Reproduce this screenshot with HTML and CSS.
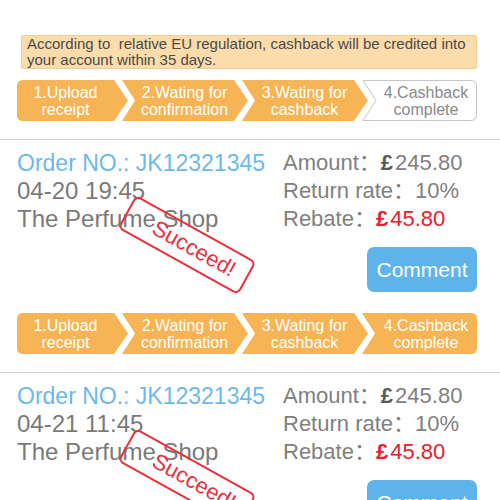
FILE: index.html
```html
<!DOCTYPE html>
<html>
<head>
<meta charset="utf-8">
<link rel="stylesheet" href="styles.css">
</head>
<body>
<div class="page">
  <div class="notice">According to&nbsp; relative EU regulation, cashback will be credited into your account within 35 days.</div>

  <section class="block">
    <div class="steps">
      <div class="step step-first">
        <svg class="shape" width="111" height="41" viewBox="0 0 111 41"><path d="M6,0 H97 L111,20.5 L97,41 H6 Q0,41 0,35 V6 Q0,0 6,0 Z"/></svg>
        <span class="label">1.Upload<br>receipt</span>
      </div>
      <div class="step step-mid">
        <svg class="shape" width="126" height="41" viewBox="0 0 126 41"><path d="M0,0 H112 L126,20.5 L112,41 H0 L13,20.5 Z"/></svg>
        <span class="label">2.Wating for<br>confirmation</span>
      </div>
      <div class="step step-mid">
        <svg class="shape" width="126" height="41" viewBox="0 0 126 41"><path d="M0,0 H112 L126,20.5 L112,41 H0 L13,20.5 Z"/></svg>
        <span class="label">3.Wating for<br>cashback</span>
      </div>
      <div class="step step-last step-pending">
        <svg class="shape" width="115" height="41" viewBox="0 0 115 41"><path d="M1,0.5 H108.5 Q114.5,0.5 114.5,6.5 V34.5 Q114.5,40.5 108.5,40.5 H1 L14,20.5 Z"/></svg>
        <span class="label">4.Cashback<br>complete</span>
      </div>
    </div>
    <hr class="sep">
    <div class="info">
      <div class="col-left">
        <div class="order">Order NO.: JK12321345</div>
        <div class="meta">04-20 19:45</div>
        <div class="meta">The Perfume Shop</div>
      </div>
      <div class="col-right">
        <div>Amount：<span class="pound">£</span>245.80</div>
        <div>Return rate：10%</div>
        <div>Rebate：<span class="red"><span class="pound">£</span>45.80</span></div>
      </div>
    </div>
    <div class="actions"><button class="comment">Comment</button></div>
    <div class="stamp"><span>Succeed!</span></div>
  </section>

  <section class="block">
    <div class="steps">
      <div class="step step-first">
        <svg class="shape" width="111" height="41" viewBox="0 0 111 41"><path d="M6,0 H97 L111,20.5 L97,41 H6 Q0,41 0,35 V6 Q0,0 6,0 Z"/></svg>
        <span class="label">1.Upload<br>receipt</span>
      </div>
      <div class="step step-mid">
        <svg class="shape" width="126" height="41" viewBox="0 0 126 41"><path d="M0,0 H112 L126,20.5 L112,41 H0 L13,20.5 Z"/></svg>
        <span class="label">2.Wating for<br>confirmation</span>
      </div>
      <div class="step step-mid">
        <svg class="shape" width="126" height="41" viewBox="0 0 126 41"><path d="M0,0 H112 L126,20.5 L112,41 H0 L13,20.5 Z"/></svg>
        <span class="label">3.Wating for<br>cashback</span>
      </div>
      <div class="step step-last">
        <svg class="shape" width="115" height="41" viewBox="0 0 115 41"><path d="M0,0 H109 Q115,0 115,6 V35 Q115,41 109,41 H0 L13,20.5 Z"/></svg>
        <span class="label">4.Cashback<br>complete</span>
      </div>
    </div>
    <hr class="sep">
    <div class="info">
      <div class="col-left">
        <div class="order">Order NO.: JK12321345</div>
        <div class="meta">04-21 11:45</div>
        <div class="meta">The Perfume Shop</div>
      </div>
      <div class="col-right">
        <div>Amount：<span class="pound">£</span>245.80</div>
        <div>Return rate：10%</div>
        <div>Rebate：<span class="red"><span class="pound">£</span>45.80</span></div>
      </div>
    </div>
    <div class="actions"><button class="comment">Comment</button></div>
    <div class="stamp"><span>Succeed!</span></div>
  </section>
</div>
</body>
</html>
```

FILE: styles.css
```css
html, body {
  margin: 0;
  padding: 0;
  background: #ffffff;
  overflow: hidden;
}

.page {
  width: 500px;
  font-family: "Liberation Sans", "Noto Sans CJK SC", sans-serif;
  color: #7a7a7a;
}

.notice {
  margin: 35px 23px 0 21px;
  padding: 0 5px;
  background: #fddcab;
  border: 1px solid #f6cb94;
  border-radius: 2px;
  color: #4a4a4a;
  font-size: 15px;
  line-height: 16px;
}

.block {
  position: relative;
}

.steps {
  display: flex;
  margin-top: 11px;
  padding-left: 17px;
  height: 41px;
}

.block + .block .steps {
  margin-top: 0;
}

.step {
  position: relative;
  height: 41px;
  display: flex;
  align-items: center;
  justify-content: center;
  flex: none;
}

.step + .step {
  margin-left: -6px;
}

.step-first { width: 111px; padding-right: 14px; box-sizing: border-box; }
.step-mid { width: 126px; padding: 0 14px 0 13px; box-sizing: border-box; }
.step-last { width: 115px; padding-left: 13px; box-sizing: border-box; }

.shape {
  position: absolute;
  left: 0;
  top: 0;
  display: block;
}

.shape path {
  fill: #f6b454;
}

.step-pending .shape path {
  fill: #ffffff;
  stroke: #c4c4c4;
  stroke-width: 1;
}

.label {
  position: relative;
  color: #ffffff;
  font-size: 16px;
  line-height: 17px;
  text-align: center;
  white-space: nowrap;
}

.step-pending .label {
  color: #8a8a8a;
}

.sep {
  margin: 18px 0 9px;
  border: 0;
  height: 1px;
  background: #cfcfcf;
}

.info {
  display: grid;
  grid-template-columns: 266px 1fr;
  padding: 0 17px;
  line-height: 28px;
  white-space: nowrap;
}

.order {
  color: #6cb9ea;
  font-size: 23px;
}

.meta {
  color: #7a7a7a;
  font-size: 24px;
}

.col-right {
  font-size: 22px;
  color: #808080;
}

.pound {
  font-weight: bold;
  color: #5a5a5a;
  margin-right: 2px;
}

.red,
.red .pound {
  color: #e8202c;
}

.actions {
  display: flex;
  justify-content: flex-end;
  margin-top: 14px;
  margin-bottom: 21px;
  padding-right: 23px;
}

.comment {
  width: 110px;
  height: 45px;
  border: 0;
  border-radius: 7px;
  background: #5eb4ea;
  color: #ffffff;
  font-family: "Liberation Sans", sans-serif;
  font-size: 21px;
  padding: 0;
}

.stamp {
  position: absolute;
  left: 118px;
  top: 146px;
  width: 138px;
  height: 38px;
  box-sizing: border-box;
  border: 2px solid #e8303c;
  border-radius: 6px;
  transform: rotate(29deg);
  display: flex;
  align-items: center;
  justify-content: center;
  padding-left: 16px;
  color: #e8303c;
  font-size: 22px;
}
```
